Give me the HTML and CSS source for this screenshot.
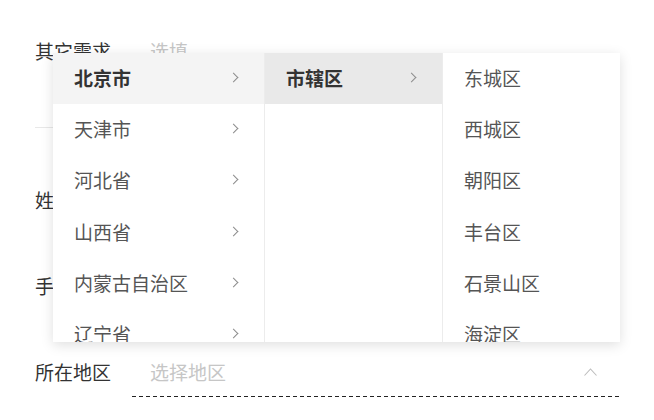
FILE: index.html
```html
<!DOCTYPE html>
<html lang="zh-CN">
<head>
  <meta charset="UTF-8">
  <meta name="viewport" content="width=device-width, initial-scale=1.0">
  <title>所在地区</title>
  <link rel="stylesheet" href="styles.css">
</head>
<body>
  <div class="page">
    <!-- 表单 -->
    <form class="form">
      <div class="field field-top">
        <span class="label">其它需求</span>
        <span class="input placeholder">选填</span>
      </div>
      <div class="divider"></div>
      <div class="field">
        <span class="label">姓名</span>
        <span class="input placeholder">请输入姓名</span>
      </div>
      <div class="field">
        <span class="label">手机号</span>
        <span class="input placeholder">请输入手机号</span>
      </div>
      <div class="field">
        <span class="label">所在地区</span>
        <div class="input picker">
          <span class="placeholder">选择地区</span>
          <svg class="chevron" width="13" height="8" viewBox="0 0 13 8">
            <polyline points="0.5,7.5 6.5,1 12.5,7.5" fill="none" stroke="#bdbdbd" stroke-width="1.1"/>
          </svg>
        </div>
      </div>
    </form>

    <!-- 级联选择弹层 -->
    <div class="cascader">
      <ul class="col col-province">
        <li class="item active"><span>北京市</span><i class="arrow"></i></li>
        <li class="item"><span>天津市</span><i class="arrow"></i></li>
        <li class="item"><span>河北省</span><i class="arrow"></i></li>
        <li class="item"><span>山西省</span><i class="arrow"></i></li>
        <li class="item"><span>内蒙古自治区</span><i class="arrow"></i></li>
        <li class="item"><span>辽宁省</span><i class="arrow"></i></li>
      </ul>
      <ul class="col col-city">
        <li class="item active"><span>市辖区</span><i class="arrow"></i></li>
      </ul>
      <ul class="col col-district">
        <li class="item"><span>东城区</span></li>
        <li class="item"><span>西城区</span></li>
        <li class="item"><span>朝阳区</span></li>
        <li class="item"><span>丰台区</span></li>
        <li class="item"><span>石景山区</span></li>
        <li class="item"><span>海淀区</span></li>
      </ul>
    </div>
  </div>
</body>
</html>
```

FILE: styles.css
```css
body {
  margin: 0;
  padding: 0;
  background: #fff;
  font-family: "Noto Sans CJK SC", "Noto Sans", sans-serif;
  font-size: 19px;
  color: #333;
  overflow: hidden;
}
.page {
  position: relative;
  width: 654px;
  height: 420px;
}
.form {
  padding: 30px 34px 0 35px;
}
.field {
  display: flex;
  align-items: center;
  height: 86px;
}
.field-top {
  height: 44px;
}
.label {
  width: 97px;
  flex-shrink: 0;
  color: #333;
  padding-bottom: 3px;
}
.input {
  flex: 1;
  padding-left: 18px;
}
.placeholder {
  color: #c6c6c6;
  padding-bottom: 3px;
}
.divider {
  height: 1px;
  background: #e8e8e8;
  margin: 53px 0 30px;
}
.picker {
  display: flex;
  align-items: center;
  justify-content: space-between;
  box-sizing: border-box;
  height: 48px;
  padding-right: 23px;
  padding-bottom: 0;
  margin-bottom: 0;
  background: repeating-linear-gradient(to right, #222 0 4px, transparent 4px 7px) left bottom / 100% 1px no-repeat;
}
.chevron {
  display: block;
  margin-bottom: 2px;
}

/* 弹层 */
.cascader {
  position: absolute;
  top: 53px;
  left: 53px;
  width: 567px;
  height: 289px;
  display: flex;
  background: #fff;
  box-shadow: 0 3px 12px rgba(0, 0, 0, 0.13);
  overflow: hidden;
}
.col {
  list-style: none;
  margin: 0;
  padding: 0;
  box-sizing: border-box;
}
.col-province {
  width: 212px;
  border-right: 1px solid #ececec;
}
.col-city {
  width: 178px;
  border-right: 1px solid #ececec;
}
.col-district {
  flex: 1;
}
.item {
  display: flex;
  align-items: center;
  justify-content: space-between;
  box-sizing: border-box;
  height: 51.2px;
  padding: 0 25px 2px 21px;
  color: #555;
}
.col-province .item.active {
  background: #f4f4f4;
  color: #333;
  font-weight: 600;
}
.col-city .item.active {
  background: #e9e9e9;
  color: #333;
  font-weight: 600;
}
.arrow {
  width: 6px;
  height: 6px;
  border-top: 1px solid #8c8c8c;
  border-right: 1px solid #8c8c8c;
  transform: rotate(45deg);
  margin-right: 2px;
}
```
